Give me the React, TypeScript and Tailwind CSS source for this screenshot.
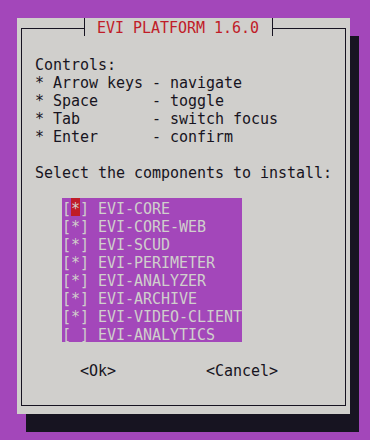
const components = [
  { name: "EVI-CORE", on: true },
  { name: "EVI-CORE-WEB", on: true },
  { name: "EVI-SCUD", on: true },
  { name: "EVI-PERIMETER", on: true },
  { name: "EVI-ANALYZER", on: true },
  { name: "EVI-ARCHIVE", on: true },
  { name: "EVI-VIDEO-CLIENT", on: true },
  { name: "EVI-ANALYTICS", on: false },
];

const controls = [
  "Controls:",
  "* Arrow keys - navigate",
  "* Space      - toggle",
  "* Tab        - switch focus",
  "* Enter      - confirm",
];

function Row({ children, className = "" }: { children?: React.ReactNode; className?: string }) {
  return <div className={`h-[18px] whitespace-pre leading-[22px] ${className}`}>{children}</div>;
}

export default function App() {
  return (
    <div
      className="h-[440px] w-[370px] overflow-hidden bg-[#a347ba] pl-[17px] pt-[18px] text-[15px] tracking-[-0.03px] text-[#171421]"
      style={{ fontFamily: '"DejaVu Sans Mono", "Liberation Mono", monospace' }}
    >
      <div className="relative h-[396px] w-[333px]">
        {/* drop shadow, one cell right and one row down */}
        <div className="absolute left-[9px] top-[18px] h-[396px] w-[333px] bg-[#171421]" />

        <div className="relative flex h-full w-full flex-col bg-[#d0cfcc] pb-[8px] pl-[4px] pr-[4px] pt-[10px]">
          <div className="flex flex-1 flex-col border border-[#171421] pl-[13px] pt-[25px]">
            {controls.map((line) => (
              <Row key={line}>{line}</Row>
            ))}
            <Row />
            <Row>Select the components to install:</Row>
            <Row />

            <div className="ml-[27px] w-[180px] bg-[#a347ba] text-[#d0cfcc]">
              {components.map((c, i) => (
                <Row key={c.name}>
                  [
                  {i === 0 ? (
                    <span className="inline-block h-[18px] bg-[#c01c28] align-top leading-[22px]">*</span>
                  ) : c.on ? (
                    "*"
                  ) : (
                    " "
                  )}
                  ] {c.name}
                </Row>
              ))}
            </div>

            <Row />
            <Row>{"     <Ok>          <Cancel>"}</Row>
          </div>

          {/* title sits over the top border */}
          <div className="absolute left-[67px] top-0 flex h-[18px] items-start">
            <div className="h-[18px] w-[1px] bg-[#171421]" />
            <div className="h-[18px] whitespace-pre bg-[#d0cfcc] pl-[12px] pr-[13px] leading-[20px] text-[#c01c28]">
              EVI PLATFORM 1.6.0
            </div>
            <div className="h-[18px] w-[1px] bg-[#171421]" />
          </div>
        </div>
      </div>
    </div>
  );
}
